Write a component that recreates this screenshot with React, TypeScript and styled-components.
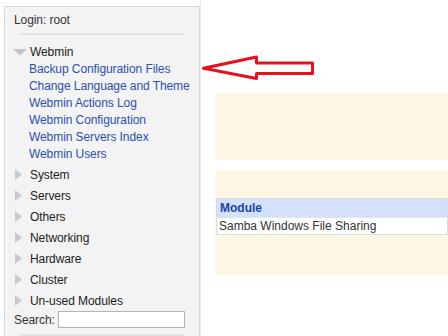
import React from "react";
import styled, { createGlobalStyle } from "styled-components";

const GlobalStyle = createGlobalStyle`
  html, body { margin: 0; padding: 0; background: #ffffff; }
  body {
    font-family: "Liberation Sans", Arial, sans-serif;
    font-size: 12px;
    color: #222;
    overflow: hidden;
  }
`;

const Page = styled.div`
  display: flex;
  height: 336px;
  overflow: hidden;
  position: relative;
`;

const Sidebar = styled.nav`
  box-sizing: border-box;
  width: 196px;
  margin: 6px 0 0 4px;
  height: 340px;
  flex: none;
  background: #f3f3f3;
  border: 1px solid #d9d9d9;
  border-bottom: none;
  padding: 0 9px 0 9px;
  display: flex;
  flex-direction: column;
  letter-spacing: -0.08px;
`;

const LoginRow = styled.div`
  padding-top: 5px;
  line-height: 16px;
  color: #333;
`;

const Separator = styled.div<{ $top: number }>`
  height: 2px;
  background: #e3e3e3;
  margin: ${(p) => p.$top}px 0 0 5px;
  width: 166px;
`;

const CategoryRow = styled.div<{ $h: number; $top?: number }>`
  display: flex;
  align-items: center;
  height: ${(p) => p.$h}px;
  margin-top: ${(p) => p.$top ?? 0}px;
  color: #222;
  white-space: nowrap;
`;

const Arrow = styled.span<{ $open?: boolean }>`
  display: inline-flex;
  width: 16px;
  margin-left: ${(p) => (p.$open ? -1 : 1)}px;
  margin-right: ${(p) => (p.$open ? 1 : -1)}px;
  align-items: center;
`;

const LinkList = styled.ul`
  list-style: none;
  margin: 0 0 1px 0;
  padding: 0 0 0 15px;
`;

const LinkItem = styled.li`
  line-height: 17px;
  color: #2a50b0;
  white-space: nowrap;
`;

const SearchRow = styled.div`
  display: flex;
  align-items: center;
  gap: 3px;
  height: 18px;
  margin-top: -0.5px;
  color: #333;
`;

const SearchInput = styled.input`
  box-sizing: border-box;
  width: 127px;
  height: 17px;
  border: 1px solid #b4b4b4;
  background: #fff;
  padding: 0 2px;
  font-family: inherit;
  font-size: 12px;
`;

const Main = styled.main`
  flex: 1;
  min-width: 0;
  border-left: 1px solid #ececec;
  padding: 93px 0 0 14px;
  display: flex;
  flex-direction: column;
  gap: 11px;
`;

const CreamBox = styled.section<{ $h: number; $padTop?: number }>`
  background: #fdf6e3;
  height: ${(p) => p.$h}px;
  padding-top: ${(p) => p.$padTop ?? 0}px;
  box-sizing: border-box;
`;

const ModuleTable = styled.table`
  margin-left: 1px;
  width: calc(100% - 1px);
  border-collapse: collapse;
  border: 1px solid #dcdcdc;
  background: #fff;
`;

const HeadCell = styled.th`
  text-align: left;
  background: #d3e1fb;
  color: #1b45a3;
  font-weight: bold;
  height: 18px;
  padding: 0 0 0 3px;
  line-height: 18px;
`;

const Cell = styled.td`
  height: 16px;
  padding: 0 0 0 2px;
  color: #333;
  border-top: 1px solid #e6e6e6;
  line-height: 16px;
`;

const Annotation = styled.svg`
  position: absolute;
  left: 200px;
  top: 52px;
`;

const RightTriangle = () => (
  <svg width="8" height="11" viewBox="0 0 8 11">
    <polygon points="0,0 7,5.5 0,11" fill="#c8c8ce" />
  </svg>
);

const DownTriangle = () => (
  <svg width="14" height="7" viewBox="0 0 14 7">
    <polygon points="0,0 14,0 7,6.5" fill="#c4c4cc" />
  </svg>
);

const webminLinks = [
  "Backup Configuration Files",
  "Change Language and Theme",
  "Webmin Actions Log",
  "Webmin Configuration",
  "Webmin Servers Index",
  "Webmin Users",
];

const categories = [
  "System",
  "Servers",
  "Others",
  "Networking",
  "Hardware",
  "Cluster",
  "Un-used Modules",
];

export default function App() {
  return (
    <>
      <GlobalStyle />
      <Page>
        <Sidebar>
          <LoginRow>Login: root</LoginRow>
          <Separator $top={5} />
          <CategoryRow $h={18} $top={8}>
            <Arrow $open>
              <DownTriangle />
            </Arrow>
            Webmin
          </CategoryRow>
          <LinkList>
            {webminLinks.map((l) => (
              <LinkItem key={l}>{l}</LinkItem>
            ))}
          </LinkList>
          {categories.map((c) => (
            <CategoryRow key={c} $h={21}>
              <Arrow>
                <RightTriangle />
              </Arrow>
              {c}
            </CategoryRow>
          ))}
          <SearchRow>
            Search:
            <SearchInput type="text" />
          </SearchRow>
          <Separator $top={5} />
        </Sidebar>
        <Main>
          <CreamBox $h={67} />
          <CreamBox $h={104} $padTop={27}>
            <ModuleTable>
              <thead>
                <tr>
                  <HeadCell>Module</HeadCell>
                </tr>
              </thead>
              <tbody>
                <tr>
                  <Cell>Samba Windows File Sharing</Cell>
                </tr>
              </tbody>
            </ModuleTable>
          </CreamBox>
        </Main>
        <Annotation width="118" height="30" viewBox="200 52 118 30">
          <polygon
            points="203.5,68.3 256.5,57 256.5,63 312.5,63 312.5,73.5 256.5,73.5 256.5,78.5"
            fill="#ffffff"
            stroke="#e8101e"
            strokeWidth="3"
            strokeLinejoin="round"
          />
        </Annotation>
      </Page>
    </>
  );
}
